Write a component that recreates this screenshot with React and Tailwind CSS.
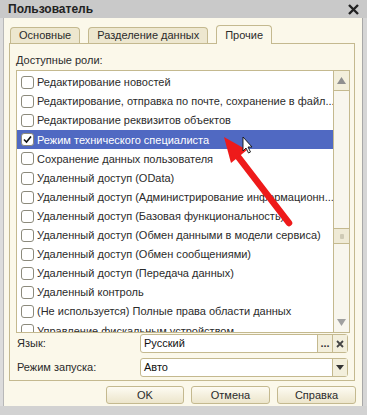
import React from 'react';

const roles = [
  'Редактирование новостей',
  'Редактирование, отправка по почте, сохранение в файл...',
  'Редактирование реквизитов объектов',
  'Режим технического специалиста',
  'Сохранение данных пользователя',
  'Удаленный доступ (OData)',
  'Удаленный доступ (Администрирование информационн...',
  'Удаленный доступ (Базовая функциональность)',
  'Удаленный доступ (Обмен данными в модели сервиса)',
  'Удаленный доступ (Обмен сообщениями)',
  'Удаленный доступ (Передача данных)',
  'Удаленный контроль',
  '(Не используется) Полные права области данных',
  'Управление фискальным устройством',
];

const Checkbox = ({ checked }) => (
  <span className="w-[13px] h-[13px] shrink-0 rounded-[3px] border border-[#8c8a7c] bg-white flex items-center justify-center">
    {checked && (
      <svg width="9" height="9" viewBox="0 0 9 9">
        <path d="M1 4.5 L3.5 7 L8 1.5" fill="none" stroke="#111" strokeWidth="1.6" />
      </svg>
    )}
  </span>
);

const Tab = ({ label, active }) => (
  <div
    className={`px-[8px] rounded-t-[4px] border border-b-0 border-[#c4b98f] flex items-center ${
      active ? 'h-[19px] bg-[#fbf8ea] -mb-px z-10' : 'h-[16px] bg-[#ede7cf]'
    }`}
  >
    {label}
  </div>
);

const Button = ({ label, wide }) => (
  <div
    className={`h-[18px] rounded-[3px] border border-[#c4b98f] bg-gradient-to-b from-[#fdfbf2] to-[#ece5cb] flex items-center justify-center ${
      wide ? 'w-[79px]' : 'w-[78px]'
    }`}
  >
    {label}
  </div>
);

export default function App() {
  return (
    <div
      className="relative w-[367px] h-[415px] bg-[#d2d2d2] text-[11px] text-[#2b2b2b] overflow-hidden"
      style={{ fontFamily: '"Liberation Sans", Arial, sans-serif' }}
    >
      {/* title bar */}
      <div className="h-[18px] bg-[#c9c9c9] flex items-center justify-between pl-[8px] pr-[7px]">
        <span className="font-bold text-[12px] text-[#222]">Пользователь</span>
        <svg width="13" height="13" viewBox="0 0 13 13">
          <path d="M2 2 L11 11 M11 2 L2 11" stroke="#222" strokeWidth="2.4" />
        </svg>
      </div>

      <div className="flex h-[388px]">
        <div className="w-[4px] bg-[#dcdcdc] border-r border-[#b8b8b8]" />
        <div className="w-[358px] bg-[#fbf8ea] flex flex-col pt-[6px]">
          {/* tabs */}
          <div className="flex items-end gap-[8px] pl-[6px] h-[19px]">
            <Tab label="Основные" />
            <Tab label="Разделение данных" />
            <Tab label="Прочие" active />
          </div>

          {/* tab panel */}
          <div className="ml-[5px] w-[346px] h-[338px] border border-[#c4b98f] flex flex-col px-[6px] pt-[9px]">
            <div className="h-[17px] leading-[14px]">Доступные роли:</div>
            <div className="w-[334px] h-[263px] border border-[#c4b98f] bg-white flex overflow-hidden">
              <div className="flex-1 min-w-0 pt-[2px]">
                {roles.map((r, i) => (
                  <div
                    key={r}
                    className={`h-[19.1px] flex items-center gap-[3px] pl-[4px] pr-[2px] whitespace-nowrap ${
                      i === 3 ? 'bg-[#5069c2] text-white' : ''
                    }`}
                  >
                    <Checkbox checked={i === 3} />
                    <span>{r}</span>
                  </div>
                ))}
              </div>
              {/* scrollbar */}
              <div className="w-[16px] shrink-0 border-l border-[#c4b98f] bg-[#f8f6ee] flex flex-col">
                <div className="h-[20px] border-b border-[#c4b98f] bg-[#f3efdc] flex items-center justify-center">
                  <svg width="9" height="7" viewBox="0 0 9 7">
                    <path d="M4.5 0 L9 7 L0 7 Z" fill="#8f8f8f" />
                  </svg>
                </div>
                <div className="h-[137px]" />
                <div className="h-[16px] border-y border-[#c4b98f] bg-[#efead6] flex items-center justify-center">
                  <div className="w-[4px] h-[5px] bg-[#cfcab5] rounded-[1px]" />
                </div>
                <div className="flex-1" />
                <div className="h-[20px] flex items-center justify-center">
                  <svg width="9" height="7" viewBox="0 0 9 7">
                    <path d="M0 0 L9 0 L4.5 7 Z" fill="#a0a0a0" />
                  </svg>
                </div>
              </div>
            </div>

            {/* fields */}
            <div className="flex items-center h-[19px] mt-px">
              <span className="w-[124px] pl-[1px]">Язык:</span>
              <div className="w-[208px] h-[19px] rounded-[3px] border border-[#c4b98f] bg-white flex items-center">
                <span className="flex-1 pl-[3px] text-[#111]">Русский</span>
                <div className="w-[15px] h-full border-l border-[#c4b98f] bg-[#f3efdc] flex items-end justify-center pb-[3px] font-bold text-[#333] leading-none">
                  ...
                </div>
                <div className="w-[15px] h-full border-l border-[#c4b98f] bg-[#f3efdc] flex items-center justify-center">
                  <svg width="8" height="8" viewBox="0 0 8 8">
                    <path d="M1 1 L7 7 M7 1 L1 7" stroke="#444" strokeWidth="1.8" />
                  </svg>
                </div>
              </div>
            </div>
            <div className="flex items-center h-[19px] mt-[5px]">
              <span className="w-[124px] pl-[1px]">Режим запуска:</span>
              <div className="w-[208px] h-[19px] rounded-[3px] border border-[#c4b98f] bg-white flex items-center">
                <span className="flex-1 pl-[3px] text-[#111]">Авто</span>
                <div className="w-[15px] h-full border-l border-[#c4b98f] bg-[#f3efdc] flex items-center justify-center">
                  <svg width="8" height="5" viewBox="0 0 8 5">
                    <path d="M0 0 L8 0 L4 5 Z" fill="#333" />
                  </svg>
                </div>
              </div>
            </div>
          </div>

          {/* buttons */}
          <div className="flex justify-end gap-[7px] pr-[6px] mt-[5px]">
            <Button label="OK" />
            <Button label="Отмена" wide />
            <Button label="Справка" wide />
          </div>
        </div>
        <div className="flex-1 bg-[#d6d6d6] border-l border-[#a8a8a8]" />
      </div>

      {/* red arrow and cursor */}
      <svg className="absolute left-0 top-0 pointer-events-none" width="367" height="415">
        <line x1="289" y1="223" x2="236" y2="154" stroke="#ee1a1a" strokeWidth="6.5" strokeLinecap="round" />
        <path d="M224 137 L247 150 L231 163 Z" fill="#ee1a1a" />
        <path
          d="M243 137 L243 151 L246 148 L248.5 153 L250.5 152 L248 147 L252 147 Z"
          fill="#fff"
          stroke="#111"
          strokeWidth="0.9"
        />
      </svg>
    </div>
  );
}
